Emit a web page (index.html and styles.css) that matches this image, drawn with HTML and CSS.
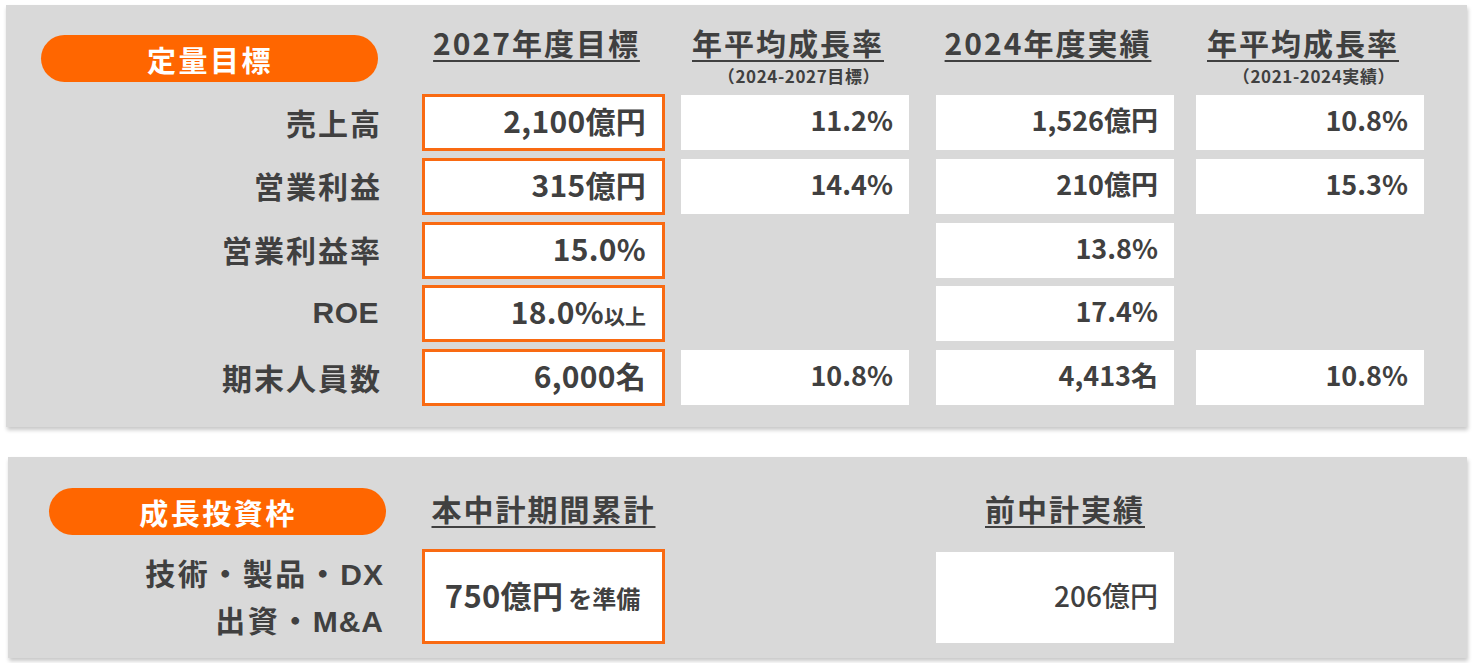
FILE: index.html
```html
<!DOCTYPE html>
<html lang="ja">
<head>
<meta charset="utf-8">
<title>定量目標</title>
<link rel="stylesheet" href="styles.css">
</head>
<body>
<div class="page">
  <section class="panel panel-goals">
    <div class="grid goals">
      <div class="head-label"><div class="pill">定量目標</div></div>
      <div class="colhead c1"><span class="title">2027年度目標</span></div>
      <div class="colhead c2"><span class="title">年平均成長率</span><span class="sub">（2024-2027目標）</span></div>
      <div class="colhead c3"><span class="title">2024年度実績</span></div>
      <div class="colhead c4"><span class="title">年平均成長率</span><span class="sub">（2021-2024実績）</span></div>

      <div class="label">売上高</div>
      <div class="cell target c1">2,100億円</div>
      <div class="cell c2">11.2%</div>
      <div class="cell c3">1,526億円</div>
      <div class="cell c4">10.8%</div>

      <div class="label">営業利益</div>
      <div class="cell target c1">315億円</div>
      <div class="cell c2">14.4%</div>
      <div class="cell c3">210億円</div>
      <div class="cell c4">15.3%</div>

      <div class="label">営業利益率</div>
      <div class="cell target c1">15.0%</div>
      <div class="cell c3">13.8%</div>

      <div class="label latin">ROE</div>
      <div class="cell target c1">18.0%<span class="small">以上</span></div>
      <div class="cell c3">17.4%</div>

      <div class="label">期末人員数</div>
      <div class="cell target c1">6,000名</div>
      <div class="cell c2">10.8%</div>
      <div class="cell c3">4,413名</div>
      <div class="cell c4">10.8%</div>
    </div>
  </section>

  <section class="panel panel-invest">
    <div class="grid invest">
      <div class="head-label"><div class="pill">成長投資枠</div></div>
      <div class="colhead c1"><span class="title">本中計期間累計</span></div>
      <div class="colhead c3 shift"><span class="title">前中計実績</span></div>

      <div class="label multi"><span>技術・製品・<span class="latin">DX</span></span><span>出資・<span class="latin">M&amp;A</span></span></div>
      <div class="cell target c1 center">750億円<span class="small2">を準備</span></div>
      <div class="cell c3 plain">206億円</div>
    </div>
  </section>
</div>
</body>
</html>
```

FILE: styles.css
```css
* { box-sizing: border-box; }
html, body { margin: 0; padding: 0; background: #ffffff; }
body {
  font-family: "Noto Sans CJK JP", "Noto Sans", sans-serif;
  color: #404040;
  width: 1475px;
  height: 663px;
  overflow: hidden;
}
.page {
  display: flex;
  flex-direction: column;
  padding-top: 5px;
}
.panel {
  background: #d9d9d9;
  box-shadow: 1px 3px 4px rgba(0, 0, 0, 0.22);
}
.panel-goals {
  margin-left: 6px;
  width: 1461px;
  height: 422px;
}
.panel-invest {
  margin-top: 30px;
  margin-left: 8px;
  width: 1459px;
  height: 201px;
}
.grid {
  display: grid;
  grid-template-columns: 417px 241px 17px 228px 27px 238px 22px 228px;
}
.goals {
  grid-template-rows: 81.25px repeat(5, 55px);
  row-gap: 8.75px;
}
.invest {
  grid-template-columns: 415px 241px 17px 228px 27px 238px 22px 228px;
  grid-template-rows: 93px 93px;
}
.head-label { grid-column: 1; }
.goals .head-label { padding: 30px 0 0 35px; }
.invest .head-label { padding: 31px 0 0 41px; }
.pill {
  width: 337px;
  height: 47px;
  border-radius: 24px;
  background: #ff6600;
  color: #ffffff;
  font-weight: 700;
  font-size: 29px;
  letter-spacing: 2.5px;
  display: flex;
  align-items: center;
  justify-content: center;
  padding-left: 1px;
}
.c1 { grid-column: 2; }
.c2 { grid-column: 4; }
.c3 { grid-column: 6; }
.c4 { grid-column: 8; }
.colhead {
  display: flex;
  flex-direction: column;
  align-items: center;
  padding-top: 17px;
}
.goals .colhead .title { margin-right: 14px; }
.invest .colhead { padding-top: 31px; }
.invest .colhead.shift { padding-left: 20px; }
.title {
  font-size: 30px;
  font-weight: 700;
  letter-spacing: 2px;
  line-height: 40px;
  text-decoration: underline;
  text-decoration-thickness: 2px;
  text-underline-offset: 5px;
  white-space: nowrap;
}
.sub {
  font-size: 17px;
  font-weight: 700;
  letter-spacing: 0.6px;
  line-height: 20px;
  margin-top: 4px;
  margin-left: 8px;
  white-space: nowrap;
}
.label {
  grid-column: 1;
  display: flex;
  align-items: center;
  justify-content: flex-end;
  padding-right: 41px;
  padding-bottom: 2px;
  font-size: 30px;
  font-weight: 700;
  letter-spacing: 2px;
  white-space: nowrap;
}
.label.latin,
.latin {
  font-family: "Liberation Sans", "Noto Sans CJK JP", sans-serif;
  letter-spacing: 0.5px;
}
.label.latin { padding-right: 44px; }
.label.multi {
  flex-direction: column;
  align-items: flex-end;
  justify-content: center;
  line-height: 45px;
  padding-right: 39px;
  padding-bottom: 0;
  letter-spacing: 2.5px;
}
.label.multi .latin { letter-spacing: 1px; }
.cell {
  background: #ffffff;
  display: flex;
  align-items: center;
  justify-content: flex-end;
  padding: 0 16px 6px 0;
  font-size: 27px;
  font-weight: 700;
  white-space: nowrap;
}
.cell.target {
  outline: 3px solid #f96a12;
  outline-offset: -2px;
  padding-right: 18px;
  padding-bottom: 5px;
  font-size: 30px;
  letter-spacing: 0.3px;
}
.cell .small {
  font-size: 21px;
  letter-spacing: 0;
  margin-top: 7px;
}
.cell.center {
  justify-content: center;
  align-items: baseline;
  padding: 22px 2px 0 0;
  font-size: 31px;
}
.cell .small2 {
  font-size: 24px;
  margin-left: 5px;
  letter-spacing: 0;
}
.cell.plain {
  font-weight: 500;
  font-size: 28px;
  margin-top: 2px;
  padding-right: 16px;
  padding-bottom: 6px;
}
```
